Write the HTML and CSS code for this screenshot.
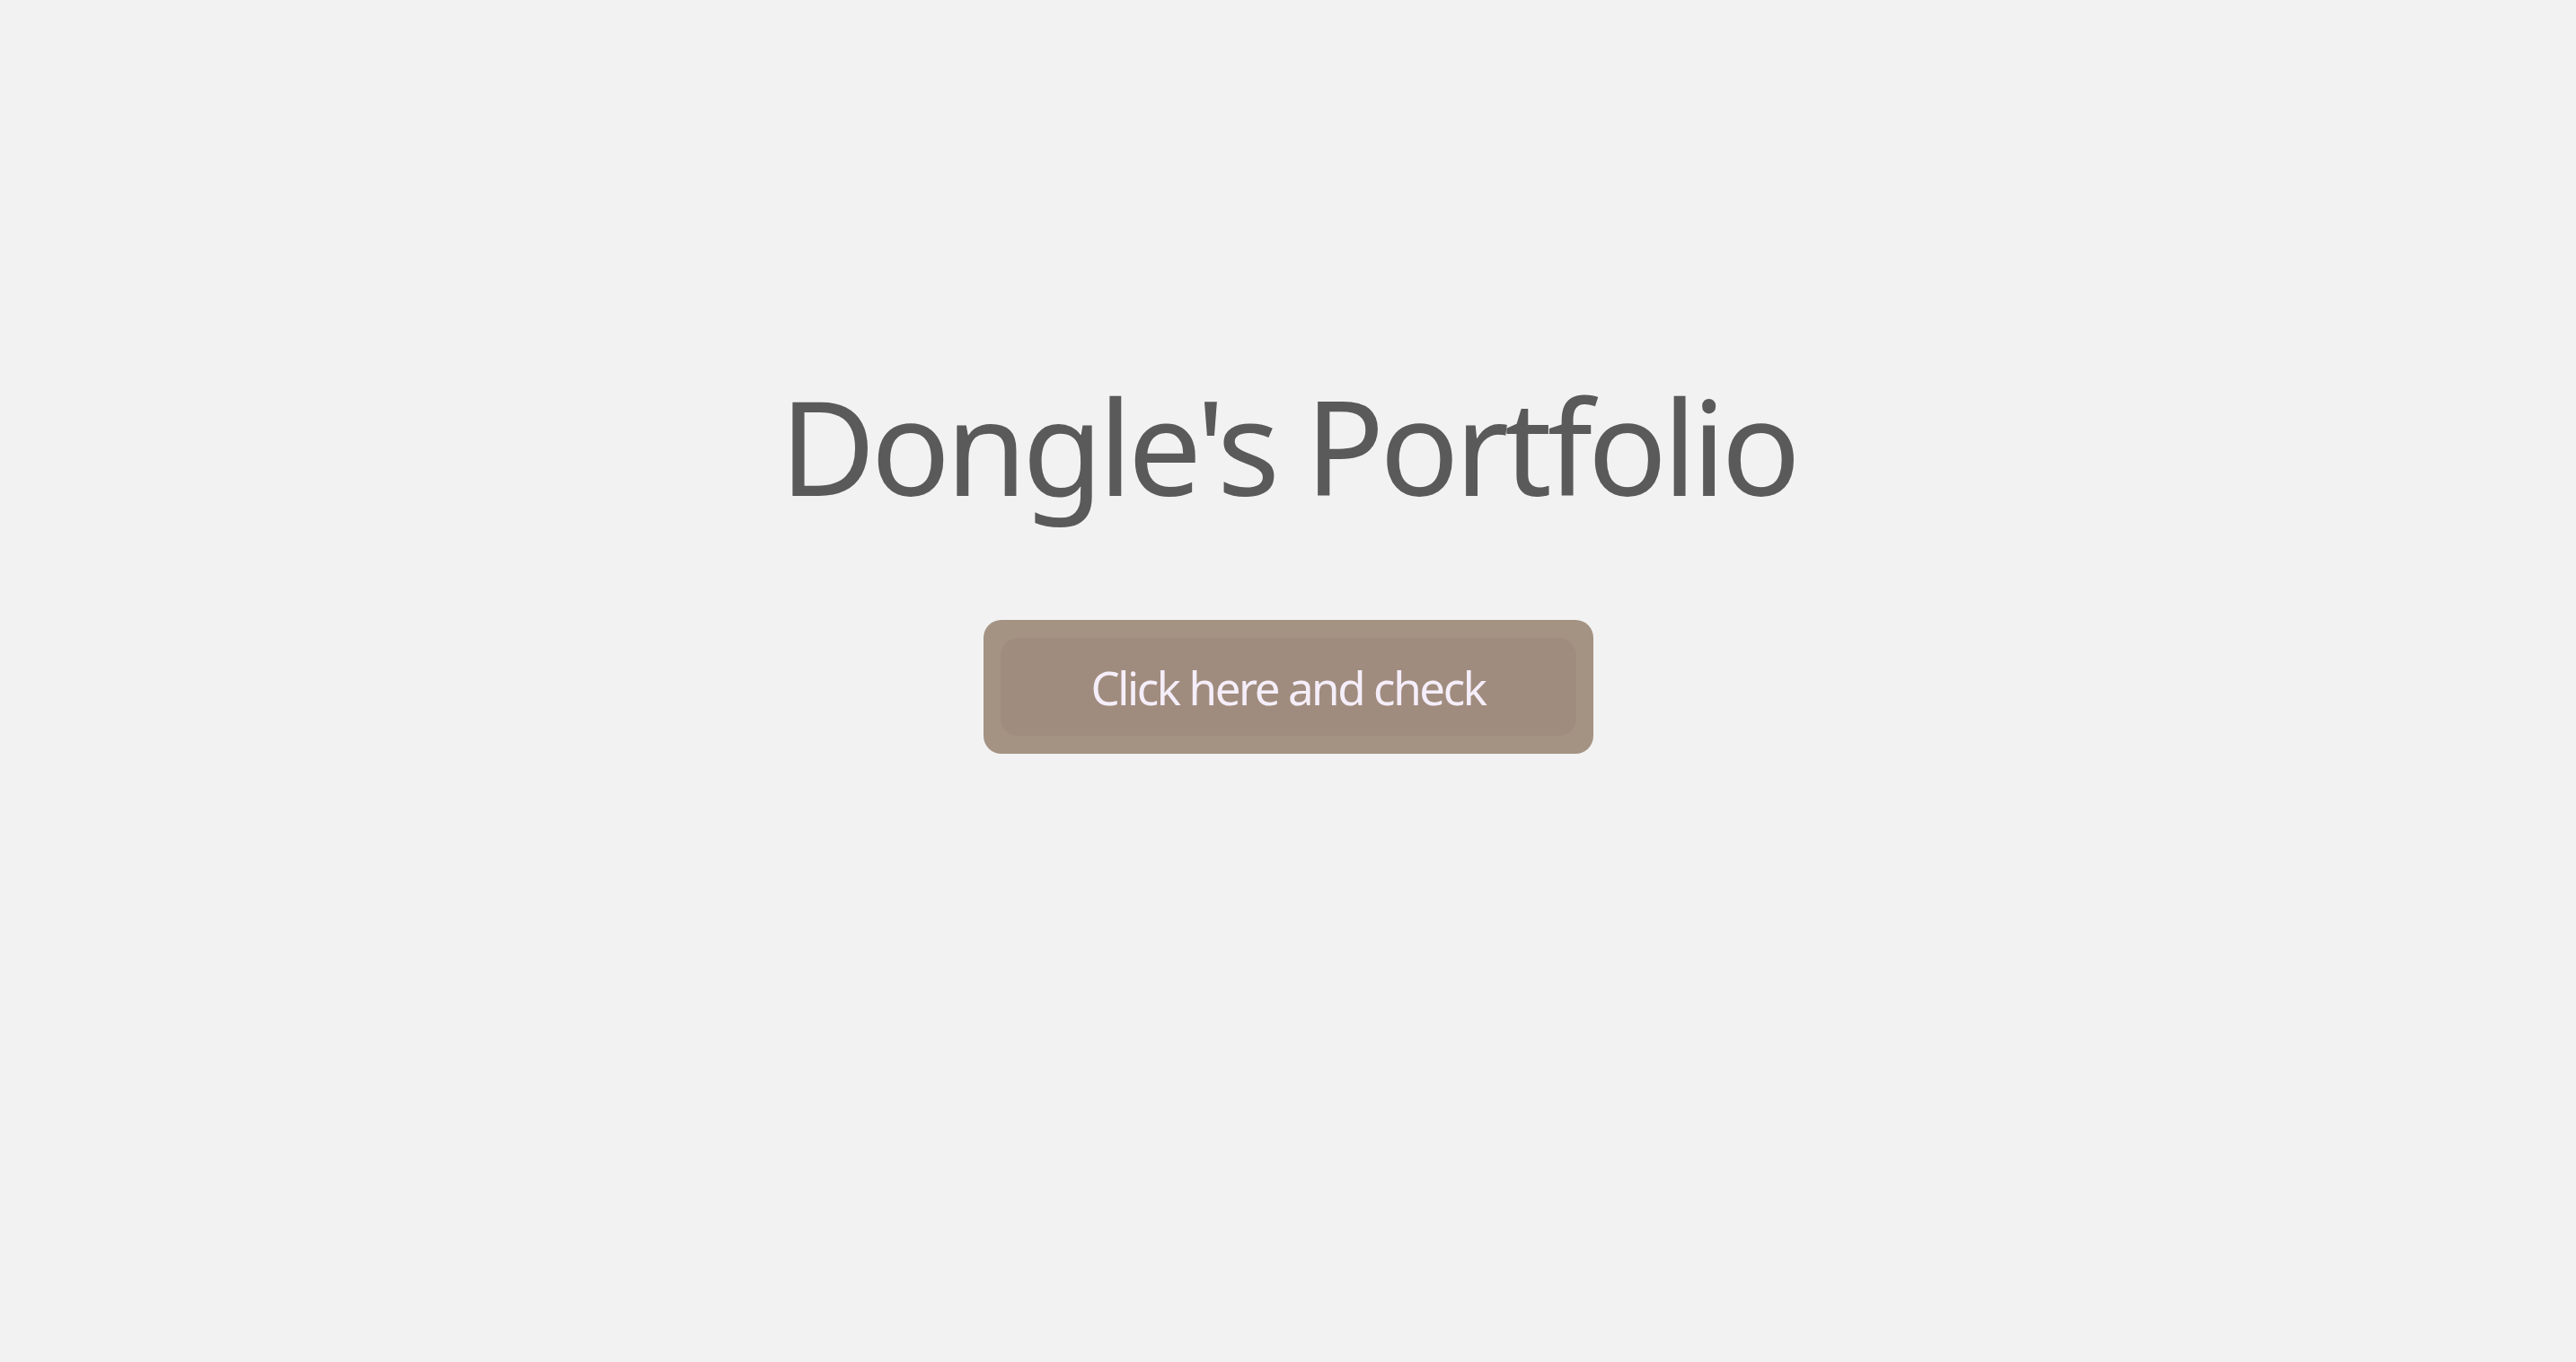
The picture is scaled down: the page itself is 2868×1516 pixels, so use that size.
FILE: index.html
```html
<!DOCTYPE html>
<html lang="en">
<head>
<meta charset="utf-8">
<title>Dongle's Portfolio</title>
<link rel="stylesheet" href="styles.css">
</head>
<body>
<main class="hero">
  <h1 class="title">Dongle's Portfolio</h1>
  <a class="cta" href="#"><span class="cta-inner">Click here and check</span></a>
</main>
</body>
</html>
```
FILE: styles.css
```css
html, body {
  margin: 0;
  padding: 0;
  background: #f2f2f2;
}
body {
  min-height: 100vh;
  font-family: "Noto Sans", "Open Sans", sans-serif;
}
.hero {
  display: flex;
  flex-direction: column;
  align-items: center;
  padding-top: 423px;
}
.title {
  margin: 0;
  font-size: 146px;
  line-height: 1;
  font-weight: 400;
  color: #5a5a5a;
  letter-spacing: -5px;
}
.cta {
  margin-top: 121px;
  box-sizing: border-box;
  width: 679px;
  height: 149px;
  padding: 20px 19px;
  border-radius: 20px;
  background: #a49383;
  text-decoration: none;
  display: flex;
}
.cta-inner {
  flex: 1;
  display: flex;
  align-items: center;
  justify-content: center;
  border-radius: 20px;
  background: #a08c7e;
  color: #f5eefa;
  font-size: 51px;
  font-weight: 400;
  letter-spacing: -2.4px;
}
```
